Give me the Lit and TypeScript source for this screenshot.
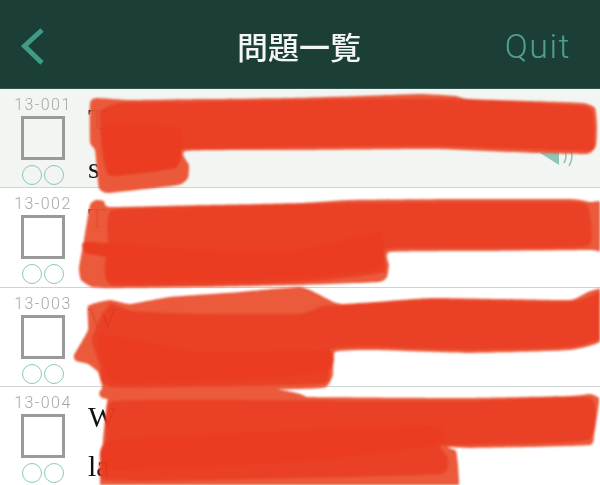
import { LitElement, html, css, svg } from "lit";
import { customElement } from "lit/decorators.js";

type Pt = [number, number];

const rows = [
  { id: "13-001", a: "T", b: "s", tint: true, sound: true },
  { id: "13-002", a: "T", b: "", tint: false, sound: false },
  { id: "13-003", a: "W", b: "", tint: false, sound: false },
  { id: "13-004", a: "W", b: "la", tint: false, sound: false },
];

/* Closed curve through hand-traced points of a brush stroke, with low tension. */
function smooth(p: Pt[]): string {
  const n = p.length;
  const k = 14;
  let d = `M${p[0][0]} ${p[0][1]}`;
  for (let i = 0; i < n; i++) {
    const a = p[(i - 1 + n) % n];
    const b = p[i];
    const c = p[(i + 1) % n];
    const e = p[(i + 2) % n];
    const c1x = b[0] + (c[0] - a[0]) / k;
    const c1y = b[1] + (c[1] - a[1]) / k;
    const c2x = c[0] - (e[0] - b[0]) / k;
    const c2y = c[1] - (e[1] - b[1]) / k;
    d += ` C${c1x.toFixed(1)} ${c1y.toFixed(1)} ${c2x.toFixed(1)} ${c2y.toFixed(1)} ${c[0]} ${c[1]}`;
  }
  return d + " Z";
}

const light: Pt[][] = [
  [[90,103],[96,98],[130,100],[200,99],[290,98],[360,96],[420,94],[455,96],[468,99],[530,101],[583,103],[595,108],[597,125],[596,146],[587,154],[533,153],[433,149],[300,150],[186,151],[189,165],[188,178],[178,185],[108,193],[99,188],[97,170],[95,150],[90,142]],
  [[90,205],[96,200],[104,201],[110,207],[200,205],[300,203],[350,200],[450,199],[570,199],[590,202],[602,203],[602,250],[590,250],[480,251],[390,252],[389,265],[387,277],[378,282],[300,285],[200,287],[110,288],[92,287],[81,280],[79,268],[84,240]],
  [[88,306],[110,300],[130,304],[170,297],[240,292],[300,287],[320,295],[342,304],[430,298],[500,299],[570,300],[588,292],[602,290],[602,340],[570,350],[470,353],[370,350],[335,352],[333,375],[326,387],[300,389],[112,391],[102,385],[98,372],[88,364],[76,361],[74,355],[88,330]],
  [[106,387],[200,386],[270,388],[300,394],[300,399],[108,399]],
  [[107,402],[112,394],[160,395],[240,396],[300,397],[460,398],[570,396],[590,394],[599,398],[598,410],[594,436],[590,445],[530,447],[470,448],[447,447],[456,451],[458,465],[459,480],[459,486],[459,492],[100,492],[100,486],[100,478],[101,470],[103,440]],
];

const main: Pt[][] = [
  [[100,112],[120,103],[200,102],[360,99],[455,99],[583,106],[593,115],[594,146],[585,151],[433,146],[300,147],[185,149],[178,150],[176,168],[110,176],[102,150]],
  [[112,210],[200,207],[350,203],[570,202],[588,207],[588,246],[480,248],[386,249],[384,272],[300,282],[112,285],[108,240]],
  [[92,338],[110,304],[132,311],[200,314],[300,314],[322,306],[345,305],[430,300],[570,302],[595,294],[602,292],[602,337],[570,347],[470,350],[370,347],[331,349],[329,373],[318,384],[112,387],[100,365]],
  [[110,402],[200,400],[460,401],[590,398],[588,440],[470,445],[440,446],[448,458],[440,474],[300,478],[105,480],[106,440]],
];

const deep: Pt[][] = [
  [[104,125],[178,128],[181,147],[177,166],[112,174],[105,150]],
  [[86,242],[200,250],[300,250],[380,232],[380,268],[300,278],[112,282],[108,258],[86,253]],
  [[100,335],[200,352],[328,350],[326,372],[200,382],[112,382]],
  [[110,440],[300,430],[436,426],[438,445],[300,462],[110,470]],
];

const LIGHT = "#ea5535";
const MAIN = "#ea3b1f";
const DEEP = "#eb361b";

const shapes = (list: Pt[][], color: string) =>
  list.map((p) => svg`<path d=${smooth(p)} fill=${color} />`);

@customElement("app-root")
export class AppRoot extends LitElement {
  static styles = css`
    :host {
      display: block;
      position: relative;
      width: 600px;
      height: 485px;
      overflow: hidden;
      background: #fff;
    }
    .bar {
      height: 89px;
      box-sizing: border-box;
      background: #1b3e36;
      display: grid;
      grid-template-columns: 1fr auto 1fr;
      align-items: center;
      padding: 4px 29px 0 19px;
      border-bottom: 1px solid #33544c;
      filter: blur(0.35px);
    }
    .back {
      width: 28px;
      height: 44px;
      display: block;
    }
    .title {
      font: 500 31px "Noto Sans CJK JP", sans-serif;
      color: #f3f6f5;
      line-height: 40px;
      transform: translateX(4px);
    }
    .quit {
      justify-self: end;
      font: 300 34px Roboto, sans-serif;
      letter-spacing: 1.5px;
      color: #4f9f8c;
      line-height: 40px;
    }
    .row {
      height: 99.33px;
      box-sizing: border-box;
      display: flex;
      border-bottom: 1px solid #cfd4d3;
      filter: blur(0.35px);
    }
    .tint {
      background: #f3f5f3;
    }
    .mark {
      width: 86px;
      display: flex;
      flex-direction: column;
      align-items: center;
      padding-top: 7px;
      box-sizing: border-box;
    }
    .id {
      font: 300 16px/18px Roboto, sans-serif;
      letter-spacing: 1.4px;
      color: #a5a8a7;
    }
    .box {
      width: 44px;
      height: 44px;
      box-sizing: border-box;
      border: 3px solid #989b99;
      margin-top: 2px;
    }
    .dots {
      display: flex;
      gap: 2px;
      margin-top: 5px;
    }
    .dot {
      width: 20px;
      height: 20px;
      box-sizing: border-box;
      border: 1.8px solid #8cc6bb;
      border-radius: 50%;
    }
    .text {
      flex: 1;
      margin-left: 2px;
      padding-top: 5px;
      font: 30px/49px "Liberation Serif", serif;
      color: #111;
    }
    .text div {
      height: 49px;
    }
    .sound {
      align-self: flex-end;
      width: 38px;
      height: 24px;
      margin: 0 23px 20px 0;
      display: block;
    }
    .paint {
      position: absolute;
      left: 0;
      top: 0;
      width: 600px;
      height: 485px;
      filter: blur(1px);
      opacity: 0.97;
      pointer-events: none;
    }
  `;

  render() {
    return html`
      <div class="bar">
        <svg class="back" viewBox="0 0 28 44">
          <path d="M23 6 L5.5 22 L23 39" fill="none" stroke="#3f9b88" stroke-width="5" />
        </svg>
        <div class="title">問題一覧</div>
        <div class="quit">Quit</div>
      </div>
      ${rows.map(
        (r) => html`
          <div class="row ${r.tint ? "tint" : ""}">
            <div class="mark">
              <div class="id">${r.id}</div>
              <div class="box"></div>
              <div class="dots"><div class="dot"></div><div class="dot"></div></div>
            </div>
            <div class="text">
              <div>${r.a}</div>
              <div>${r.b}</div>
            </div>
            ${r.sound
              ? html`<svg class="sound" viewBox="0 0 38 24">
                  <path d="M1 10 L20 2 L20 22 Z" fill="#8fc5b9" />
                  <path d="M25 6 Q29 13 25 20 M30 3 Q36 13 30 23" fill="none" stroke="#8fc5b9" stroke-width="1.6" />
                </svg>`
              : ""}
          </div>
        `
      )}
      <svg class="paint" viewBox="0 0 600 485">
        ${shapes(light, LIGHT)} ${shapes(main, MAIN)} ${shapes(deep, DEEP)}
      </svg>
    `;
  }
}
